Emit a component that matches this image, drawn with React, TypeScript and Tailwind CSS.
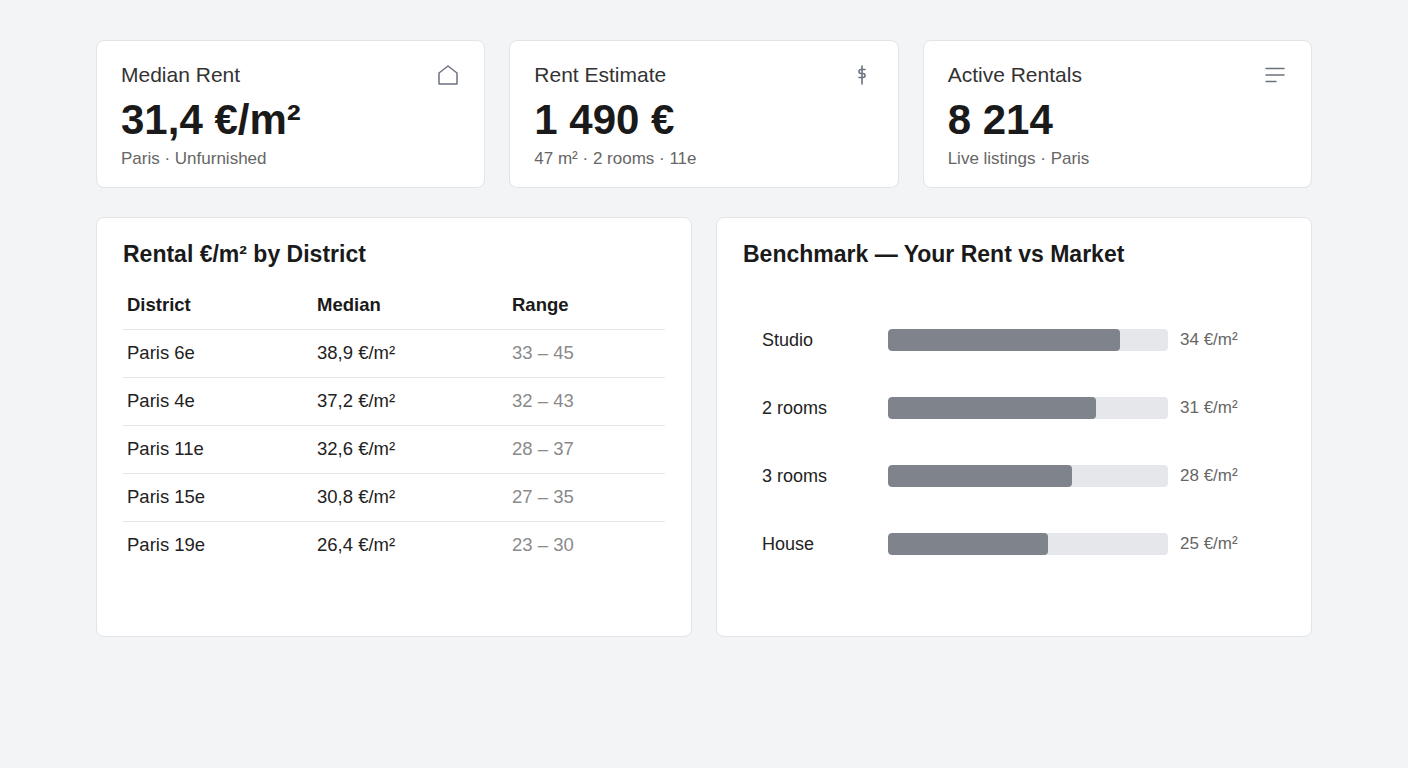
import React from 'react';

const font = { fontFamily: '"Liberation Sans", Arial, sans-serif' };

const HouseIcon = () => (
    <svg width="24" height="24" viewBox="0 0 24 24" fill="none" stroke="#6b7280" strokeWidth="1.5" strokeLinejoin="round">
        <path d="M3 21V10L12 3l9 7v11H3z" />
    </svg>
);

const DollarIcon = () => (
    <svg width="24" height="24" viewBox="0 0 24 24" fill="none" stroke="#6b7280" strokeWidth="1.6" strokeLinecap="round">
        <path d="M12 3v18" />
        <path d="M15 6.5h-4a2 2 0 0 0 0 4h2a2 2 0 0 1 0 4H9" />
    </svg>
);

const LinesIcon = () => (
    <svg width="24" height="24" viewBox="0 0 24 24" fill="none" stroke="#6b7280" strokeWidth="1.5" strokeLinecap="round">
        <path d="M3 5.5h18" />
        <path d="M3 12h18" />
        <path d="M3 18.5h10" />
    </svg>
);

const stats = [
    { title: 'Median Rent', value: '31,4 €/m²', sub: 'Paris · Unfurnished', icon: <HouseIcon /> },
    { title: 'Rent Estimate', value: '1 490 €', sub: '47 m² · 2 rooms · 11e', icon: <DollarIcon /> },
    { title: 'Active Rentals', value: '8 214', sub: 'Live listings · Paris', icon: <LinesIcon /> },
];

const districts = [
    { name: 'Paris 6e', median: '38,9 €/m²', range: '33 – 45' },
    { name: 'Paris 4e', median: '37,2 €/m²', range: '32 – 43' },
    { name: 'Paris 11e', median: '32,6 €/m²', range: '28 – 37' },
    { name: 'Paris 15e', median: '30,8 €/m²', range: '27 – 35' },
    { name: 'Paris 19e', median: '26,4 €/m²', range: '23 – 30' },
];

const bench = [
    { label: 'Studio', pct: 83, value: '34 €/m²' },
    { label: '2 rooms', pct: 74.3, value: '31 €/m²' },
    { label: '3 rooms', pct: 65.7, value: '28 €/m²' },
    { label: 'House', pct: 57.1, value: '25 €/m²' },
];

export default function App() {
    return (
        <div className="min-h-screen bg-[#f3f4f6] px-24 pt-10 pb-10" style={font}>
            {/* Stat cards */}
            <div className="grid grid-cols-3 gap-6">
                {stats.map((s) => (
                    <div key={s.title} className="bg-white border border-[#e2e4e8] rounded-lg px-6 pt-5 pb-4">
                        <div className="flex items-start justify-between">
                            <span className="text-[21px] leading-7 text-[#333333]">{s.title}</span>
                            <span className="mt-0.5">{s.icon}</span>
                        </div>
                        <div className="mt-[9px] text-[42px] leading-[44px] font-bold text-[#1a1a1a]">{s.value}</div>
                        <div className="mt-[5px] text-[17px] leading-6 text-[#666666]">{s.sub}</div>
                    </div>
                ))}
            </div>

            <div className="grid grid-cols-2 gap-6 mt-[29px]">
                {/* District table */}
                <div className="bg-white border border-[#e2e4e8] rounded-lg px-[26px] pt-[22px] h-[420px]">
                    <h2 className="text-[23px] leading-7 font-bold text-[#1a1a1a]">Rental €/m² by District</h2>
                    <table className="w-full mt-[13px] text-[18.5px] text-left">
                        <thead>
                            <tr className="h-12 border-b border-[#e5e7eb]">
                                <th className="w-[194px] pl-1 font-bold text-[#1a1a1a]">District</th>
                                <th className="w-[195px] font-bold text-[#1a1a1a]">Median</th>
                                <th className="font-bold text-[#1a1a1a]">Range</th>
                            </tr>
                        </thead>
                        <tbody>
                            {districts.map((d, i) => (
                                <tr key={d.name} className={`h-12 ${i < districts.length - 1 ? 'border-b border-[#e5e7eb]' : ''}`}>
                                    <td className="pl-1 text-[#222222]">{d.name}</td>
                                    <td className="text-[#222222]">{d.median}</td>
                                    <td className="text-[#8a8a8a]">{d.range}</td>
                                </tr>
                            ))}
                        </tbody>
                    </table>
                </div>

                {/* Benchmark */}
                <div className="bg-white border border-[#e2e4e8] rounded-lg px-[26px] pt-[22px] h-[420px]">
                    <h2 className="text-[23px] leading-7 font-bold text-[#1a1a1a]">Benchmark — Your Rent vs Market</h2>
                    <div className="mt-[38px] pl-[19px] flex flex-col">
                        {bench.map((b) => (
                            <div key={b.label} className="h-[68px] flex items-center">
                                <span className="w-[126px] text-[18px] text-[#222222]">{b.label}</span>
                                <div className="w-[280px] h-[22px] rounded-[4px] bg-[#e5e7eb] overflow-hidden">
                                    <div className="h-full rounded-[4px] bg-[#7f838c]" style={{ width: `${b.pct}%` }} />
                                </div>
                                <span className="ml-3 text-[17px] text-[#666666]">{b.value}</span>
                            </div>
                        ))}
                    </div>
                </div>
            </div>
        </div>
    );
}
